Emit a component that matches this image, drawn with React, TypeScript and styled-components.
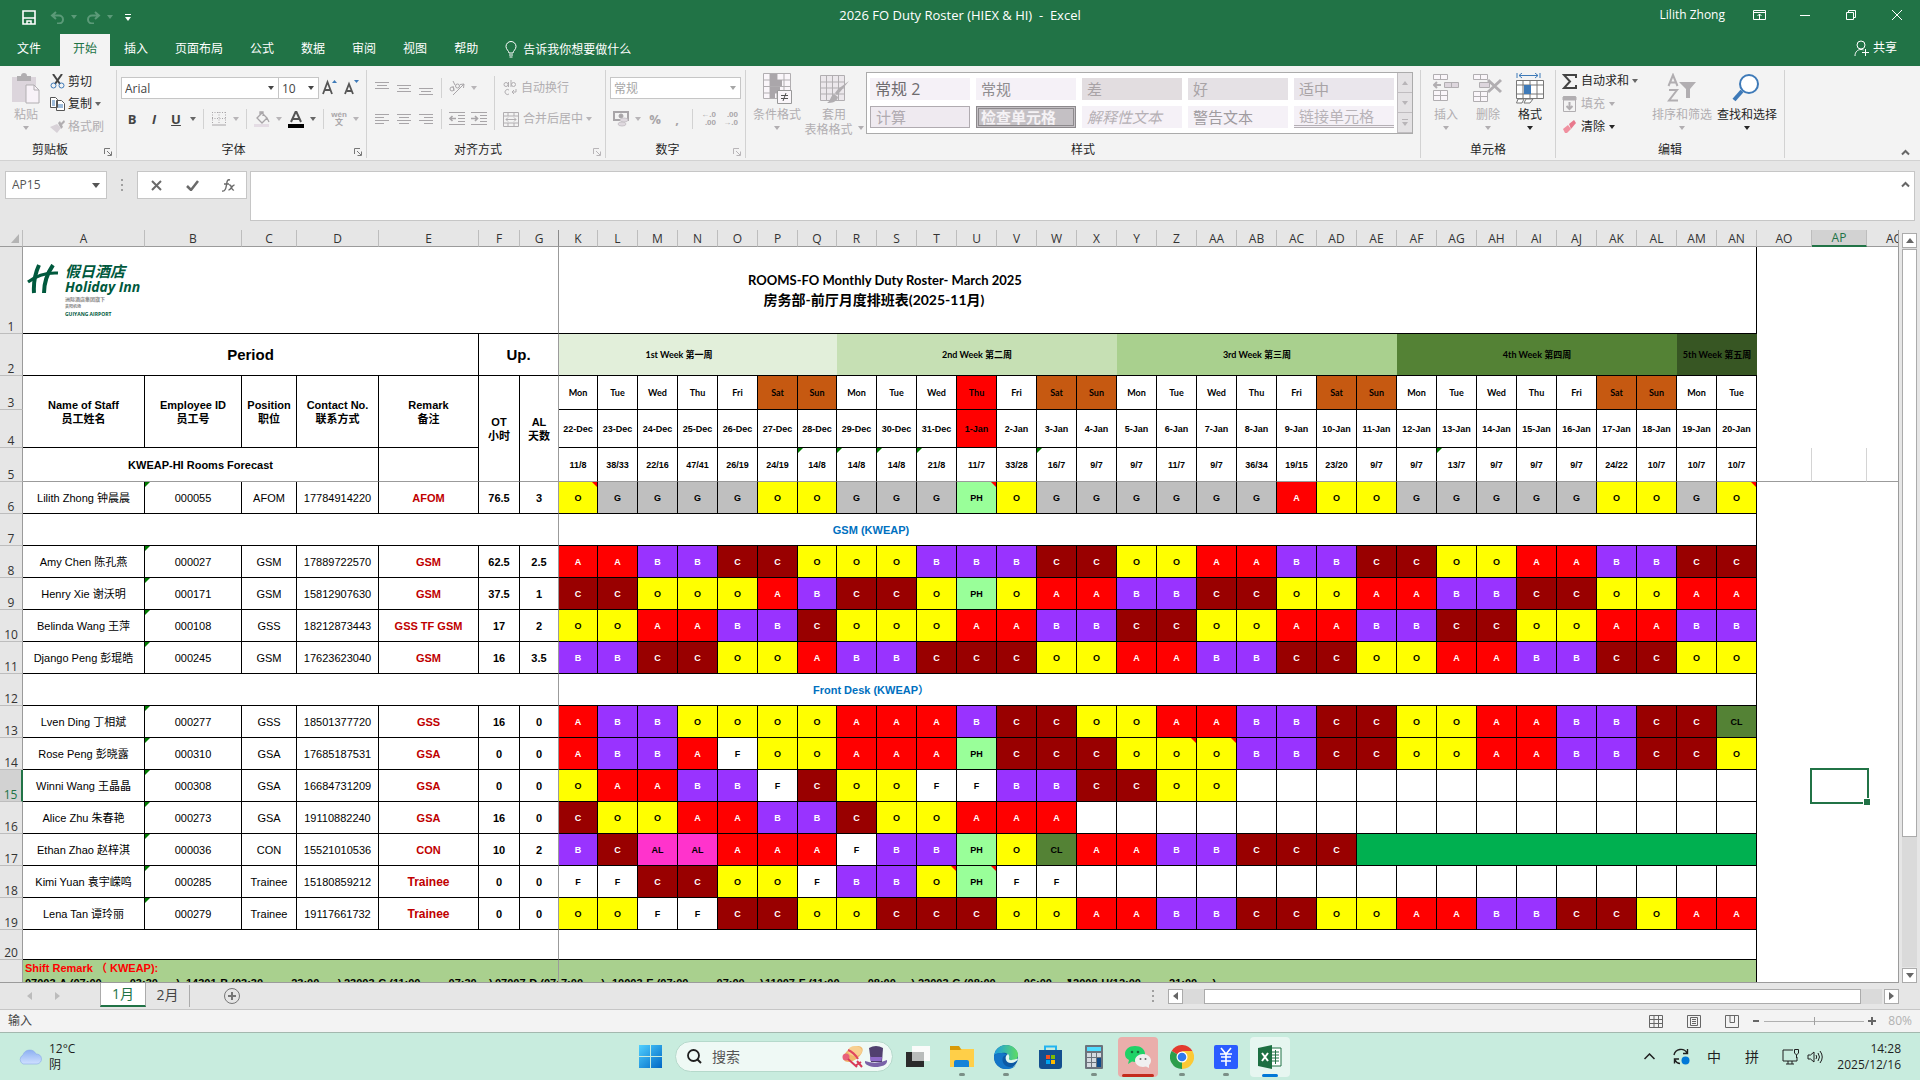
import React from "react";
import styled, { createGlobalStyle, css } from "styled-components";

const UI = `"Open Sans", "Noto Sans CJK SC", sans-serif`;
const ARIAL = `"Liberation Sans", "Noto Sans CJK SC", sans-serif`;
const CALIBRI = `Lato, "Noto Sans CJK SC", sans-serif`;
const GREEN = "#217346";

const Global = createGlobalStyle`
  * { box-sizing: border-box; }
  body { margin: 0; background: #e6e6e6; font: 12px/16px ${UI}; color: #262626; }
  button, input, select, textarea { font: inherit; color: inherit; margin: 0; padding: 0; border: 0; background: none; border-radius: 0; outline: none; }
  button { display: inline-flex; align-items: center; justify-content: center; }
  svg { display: block; flex: none; }
`;

const Page = styled.div`
  height: 100vh;
  min-height: 600px;
  display: flex;
  flex-direction: column;
  overflow: hidden;
`;

/* ---------- title bar and tabs ---------- */

const TitleBar = styled.header`
  display: grid;
  grid-template-columns: 1fr auto 1fr;
  align-items: center;
  height: 30px;
  background: ${GREEN};
  color: #fff;
`;
const QuickAccess = styled.div`
  display: flex;
  align-items: center;
  gap: 6px;
  padding: 4px 0 0 22px;
`;
const QuickButton = styled.button<{ $dim?: boolean; $gap?: number }>`
  color: ${(p) => (p.$dim ? "#5b9a78" : "#fff")};
  margin-right: ${(p) => p.$gap ?? 0}px;
`;
const DocTitle = styled.h1`
  margin: 0;
  font-size: 13px;
  font-weight: 400;
  white-space: pre;
`;
const WindowArea = styled.div`
  display: flex;
  justify-content: flex-end;
  align-items: center;
`;
const UserName = styled.span`
  margin-right: 11px;
`;
const WindowButton = styled.button`
  width: 46px;
  height: 30px;
`;

const TabRow = styled.nav`
  display: flex;
  align-items: stretch;
  gap: 1px;
  height: 36px;
  padding: 4px 15px 0 0;
  background: ${GREEN};
  color: #fff;
`;
const Tab = styled.button<{ $active?: boolean; $file?: boolean }>`
  padding: ${(p) => (p.$file ? "0 18px 3px 17px" : "0 13px 3px")};
  background: ${(p) => (p.$active ? "#f3f3f3" : "transparent")};
  color: ${(p) => (p.$active ? GREEN : "#fff")};
`;
const TellMe = styled.button`
  gap: 6px;
  padding: 0 0 1px 13px;
`;
const Share = styled.button`
  gap: 4px;
  margin-left: auto;
  padding: 0 8px 4px 0;
`;

/* ---------- ribbon ---------- */

const Ribbon = styled.section`
  display: flex;
  flex: none;
  height: 95px;
  padding: 4px 0 2px;
  background: #f3f3f3;
  border-bottom: 1px solid #d2d2d2;
`;
const Group = styled.div<{ $w: number }>`
  display: flex;
  flex-direction: column;
  flex: none;
  width: ${(p) => p.$w}px;
  border-right: 1px solid #d2d2d2;
`;
const GroupBody = styled.div<{ $pad?: number }>`
  display: flex;
  flex: 1;
  align-items: flex-start;
  padding-left: ${(p) => p.$pad ?? 4}px;
`;
const GroupFooter = styled.div`
  display: flex;
  height: 16px;
  align-items: center;
`;
const GroupName = styled.span`
  flex: 1;
  text-align: center;
`;
const Launcher = styled.button<{ $dim?: boolean }>`
  width: 16px;
  height: 12px;
  align-self: flex-end;
  color: ${(p) => (p.$dim ? "#b8b5b8" : "#777")};
`;
const Column = styled.div<{ $top?: number; $gap?: number; $left?: number; $min?: number }>`
  display: flex;
  flex-direction: column;
  min-width: ${(p) => p.$min ?? 0}px;
  padding-top: ${(p) => p.$top ?? 0}px;
  gap: ${(p) => p.$gap ?? 0}px;
  margin-left: ${(p) => p.$left ?? 0}px;
`;
const ToolRow = styled.div`
  display: flex;
  align-items: center;
  height: 22px;
`;
const Tool = styled.button<{ $dim?: boolean; $bold?: boolean; $italic?: boolean; $under?: boolean }>`
  width: 22px;
  height: 22px;
  font-size: 13px;
  color: ${(p) => (p.$dim ? "#a8a5a8" : "#444")};
  font-weight: ${(p) => (p.$bold ? 700 : 400)};
  font-style: ${(p) => (p.$italic ? "italic" : "normal")};
  text-decoration: ${(p) => (p.$under ? "underline" : "none")};
`;
const Drop = styled.button<{ $dim?: boolean }>`
  width: 12px;
  height: 22px;
  color: ${(p) => (p.$dim ? "#b8b5b8" : "#666")};
`;
const Split = styled.span<{ $h?: number }>`
  width: 1px;
  height: ${(p) => p.$h ?? 20}px;
  margin: 0 4px;
  background: #d2d2d2;
`;
const SmallButton = styled.button<{ $dim?: boolean; $h?: number; $gap?: number }>`
  justify-content: flex-start;
  height: ${(p) => p.$h ?? 23}px;
  gap: ${(p) => p.$gap ?? 4}px;
  white-space: nowrap;
  color: ${(p) => (p.$dim ? "#b1aeb1" : "#262626")};
`;
const BigButton = styled.button<{ $w: number; $dim?: boolean }>`
  flex-direction: column;
  justify-content: flex-start;
  width: ${(p) => p.$w}px;
  padding-top: 3px;
  line-height: 15px;
  white-space: nowrap;
  color: ${(p) => (p.$dim ? "#b1aeb1" : "#262626")};
  svg:first-child { margin-bottom: 3px; }
`;
const CaretLine = styled.span`
  display: flex;
  align-items: center;
  justify-content: center;
  gap: 5px;
  min-height: 15px;
`;
const SelectWrap = styled.label<{ $w: number; $dim?: boolean }>`
  display: grid;
  align-items: center;
  width: ${(p) => p.$w}px;
  height: 22px;
  background: #fff;
  border: 1px solid #c6c6c6;
  color: ${(p) => (p.$dim ? "#a6a6a6" : "#444")};
  & + & { border-left: 0; }
  select { grid-area: 1 / 1; appearance: none; width: 100%; height: 20px; padding: 1px 0 0 3px; }
  svg { grid-area: 1 / 1; justify-self: end; margin-right: 4px; pointer-events: none; }
`;

const Gallery = styled.div`
  display: flex;
  margin: 2px 0 0 2px;
  height: 62px;
  border: 1px solid #ababab;
  background: #fff;
`;
const StyleGrid = styled.div`
  display: grid;
  grid-template-columns: repeat(5, 100px);
  grid-auto-rows: 22px;
  gap: 6px;
  padding: 5px 3px;
`;
const StyleChip = styled.button<{ $bg: string; $fg: string; $kind?: string }>`
  justify-content: flex-start;
  padding-left: 5px;
  overflow: hidden;
  white-space: pre;
  font-size: ${(p) => (p.$kind === "large" ? 16 : 15)}px;
  background: ${(p) => p.$bg};
  color: ${(p) => p.$fg};
  ${(p) => p.$kind === "box" && css`border: 1px solid #b0abb0;`}
  ${(p) => p.$kind === "check" && css`border: 3px double #8d8a8d; font-weight: 700; padding-left: 2px;`}
  ${(p) => p.$kind === "italic" && css`font-style: italic;`}
  ${(p) => p.$kind === "link" && css`border-bottom: 3px double #b5b0b5;`}
`;
const GalleryScroll = styled.div`
  display: grid;
  grid-template-rows: repeat(3, 1fr);
  width: 15px;
  background: #e4e2e4;
  color: #b8b5b8;
  button { border-left: 1px solid #c0bdc0; border-bottom: 1px solid #c0bdc0; }
`;
const Collapse = styled.button`
  margin: auto 10px 2px auto;
  color: #666;
`;

/* ---------- formula bar ---------- */

const FormulaBar = styled.section`
  display: flex;
  flex: none;
  height: 69px;
  padding: 10px 5px 9px;
`;
const NameBox = styled.div`
  display: flex;
  align-items: center;
  width: 102px;
  height: 28px;
  padding: 0 6px;
  background: #fff;
  border: 1px solid #c6c6c6;
  color: #555;
  input { flex: 1; min-width: 0; }
`;
const Dots = styled.span`
  display: flex;
  flex-direction: column;
  justify-content: center;
  gap: 3px;
  height: 28px;
  width: 30px;
  align-items: center;
  i { width: 2px; height: 2px; background: #a0a0a0; }
`;
const EditButtons = styled.div`
  display: flex;
  width: 110px;
  height: 28px;
  background: #fff;
  border: 1px solid #c6c6c6;
  color: #6a6a6a;
  button { flex: 1; }
`;
const FormulaInput = styled.div`
  display: flex;
  flex: 1;
  margin-left: 3px;
  background: #fff;
  border: 1px solid #c6c6c6;
  textarea { flex: 1; resize: none; }
  button { align-items: flex-start; padding: 9px 4px; color: #666; }
`;

/* ---------- worksheet ---------- */

const SheetArea = styled.main`
  display: flex;
  flex: 1;
  min-height: 0;
`;
const Pane = styled.div`
  flex: 1;
  min-width: 0;
  overflow: hidden;
  background: #fff;
  border-bottom: 1px solid #9b9b9b;
`;
const Sheet = styled.table`
  width: 100%;
  min-width: 1890px;
  table-layout: fixed;
  border-collapse: separate;
  border-spacing: 0;
  font: 11px/14px ${ARIAL};
  color: #000;
`;
const Col = styled.col<{ $w?: number }>`
  width: ${(p) => (p.$w ? `${p.$w}px` : "auto")};
`;
const Line = styled.tr<{ $h: number }>`
  height: ${(p) => p.$h}px;
`;
const ColHead = styled.th<{ $on?: boolean; $freeze?: boolean; $cut?: boolean }>`
  padding: 0 0 0 ${(p) => (p.$cut ? 19 : 0)}px;
  overflow: hidden;
  font: 12px/15px ${UI};
  text-align: ${(p) => (p.$cut ? "left" : "center")};
  background: ${(p) => (p.$on ? "#d2d2d2" : "#e6e6e6")};
  color: ${(p) => (p.$on ? GREEN : "#333")};
  border-bottom: ${(p) => (p.$on ? `2px solid ${GREEN}` : "1px solid #9b9b9b")};
  border-right: ${(p) => (p.$cut ? 0 : 1)}px solid ${(p) => (p.$freeze ? "#8a8a8a" : "#bdbdbd")};
  svg { margin-left: 11px; }
`;
const RowHead = styled.th<{ $on?: boolean }>`
  padding: 0;
  vertical-align: bottom;
  font: 12px/13px ${UI};
  background: ${(p) => (p.$on ? "#d2d2d2" : "#e6e6e6")};
  color: ${(p) => (p.$on ? GREEN : "#333")};
  border-bottom: 1px solid #bdbdbd;
  border-right: ${(p) => (p.$on ? `2px solid ${GREEN}` : "1px solid #9b9b9b")};
`;

type CellProps = {
  $bg?: string;
  $fg?: string;
  $size?: number;
  $bold?: boolean;
  $calibri?: boolean;
  $freeze?: boolean;
  $split?: boolean;
  $noRight?: boolean;
  $left?: boolean;
  $top?: boolean;
  $shift?: number;
  $err?: boolean;
  $note?: boolean;
};
const Cell = styled.td<CellProps>`
  position: relative;
  padding: 0 ${(p) => p.$shift ?? 0}px 0 0;
  vertical-align: ${(p) => (p.$top ? "top" : "middle")};
  text-align: ${(p) => (p.$left ? "left" : "center")};
  white-space: nowrap;
  background: ${(p) => p.$bg ?? "#fff"};
  color: ${(p) => p.$fg ?? "#000"};
  font-size: ${(p) => p.$size ?? 11}px;
  font-weight: ${(p) => (p.$bold ? 700 : 400)};
  ${(p) => p.$calibri && css`font-family: ${CALIBRI};`}
  border-right: ${(p) => (p.$noRight ? "0" : `1px solid ${p.$freeze ? "#9b9b9b" : "#000"}`)};
  border-bottom: 1px solid ${(p) => (p.$split ? "#9b9b9b" : "#000")};
  ${(p) => p.$err && css`
    &::before {
      content: "";
      position: absolute;
      left: 0;
      top: 0;
      border-top: 5px solid #007a00;
      border-right: 5px solid transparent;
    }
  `}
  ${(p) => p.$note && css`
    &::after {
      content: "";
      position: absolute;
      right: 0;
      top: 0;
      border-top: 5px solid #f00;
      border-left: 5px solid transparent;
    }
  `}
`;
const Blank = styled.td<{ $line?: boolean; $split?: boolean; $selected?: boolean }>`
  position: relative;
  padding: 0;
  border-right: ${(p) => (p.$line ? "1px solid #d4d4d4" : "0")};
  border-bottom: ${(p) => (p.$split ? "1px solid #9b9b9b" : "0")};
  ${(p) => p.$selected && css`
    &::before {
      content: "";
      position: absolute;
      inset: -2px;
      border: 2px solid ${GREEN};
    }
    &::after {
      content: "";
      position: absolute;
      right: -3px;
      bottom: -3px;
      width: 6px;
      height: 6px;
      background: ${GREEN};
      border: solid #fff;
      border-width: 1px 0 0 1px;
    }
  `}
`;
const Title = styled.div<{ $w: number }>`
  width: ${(p) => p.$w}px;
  text-align: center;
`;
const TitleLine = styled.div<{ $cn?: boolean }>`
  font: 700 ${(p) => (p.$cn ? 14 : 13)}px/20px ${CALIBRI};
  padding-right: ${(p) => (p.$cn ? 22 : 0)}px;
`;
const HotelLogo = styled.div`
  display: flex;
  align-items: flex-start;
  gap: 6px;
  padding-left: 4px;
  color: #00593d;
  text-align: left;
`;
const LogoText = styled.div`
  display: flex;
  flex-direction: column;
`;
const LogoLine = styled.span<{ $size: number; $lh: number; $grey?: boolean; $slant?: boolean }>`
  font: 700 ${(p) => p.$size}px/${(p) => p.$lh}px ${UI};
  font-style: ${(p) => (p.$slant ? "italic" : "normal")};
  color: ${(p) => (p.$grey ? "#8a8a8a" : "#00593d")};
`;
const Remark = styled.div`
  height: 16px;
  line-height: 17px;
  padding-left: 2px;
  color: #f00;
  font-size: 11px;
`;
const ShiftList = styled.div<{ $cols: string }>`
  display: grid;
  grid-template-columns: ${(p) => p.$cols};
  padding-left: 2px;
  line-height: 15px;
  font-size: 11px;
  white-space: pre;
  overflow: hidden;
`;

const VScroll = styled.div`
  display: flex;
  flex-direction: column;
  width: 22px;
  padding: 3px 3px 0;
  border-left: 1px solid #9b9b9b;
  background: #e6e6e6;
`;
const ScrollButton = styled.button`
  flex: none;
  width: 15px;
  height: 15px;
  background: #fff;
  border: 1px solid #ababab;
  color: #666;
`;
const VTrack = styled.div`
  flex: 1;
  width: 15px;
  padding: 1px 0;
  background: #dadada;
  margin-bottom: 1px;
`;
const VThumb = styled.div`
  height: 82%;
  background: #fff;
  border: 1px solid #ababab;
`;

/* ---------- sheet tabs and status bar ---------- */

const SheetTabs = styled.nav`
  display: flex;
  flex: none;
  height: 27px;
  border-bottom: 1px solid #c6c6c6;
  color: #444;
`;
const NavArrows = styled.div`
  display: flex;
  width: 100px;
  padding: 0 29px 0 15px;
  color: #bcbcbc;
  button { width: 28px; }
`;
const SheetTab = styled.button<{ $active?: boolean }>`
  width: ${(p) => (p.$active ? 46 : 43)}px;
  height: 24px;
  font-size: 14px;
  background: ${(p) => (p.$active ? "#fff" : "transparent")};
  color: ${(p) => (p.$active ? GREEN : "#444")};
  ${(p) => p.$active && css`border: solid #ababab; border-width: 0 1px 2px; border-bottom-color: ${GREEN};`}
`;
const AddSheet = styled.button`
  width: 84px;
  margin-top: 2px;
  height: 22px;
  border-left: 1px solid #ababab;
`;
const HScroll = styled.div`
  display: flex;
  align-items: center;
  width: 40%;
  max-width: 761px;
  margin: 0 21px 0 auto;
`;
const HTrack = styled.div`
  display: flex;
  flex: 1;
  height: 15px;
  margin-right: 2px;
  padding: 0 21px;
  background: #dadada;
`;
const HThumb = styled.div`
  flex: 1;
  background: #fff;
  border: 1px solid #ababab;
`;
const StatusBar = styled.footer`
  display: flex;
  flex: none;
  align-items: center;
  height: 22px;
  padding: 0 8px;
  background: #f3f3f3;
  color: #444;
`;
const StatusTools = styled.div`
  display: flex;
  align-items: center;
  margin-left: auto;
`;
const ViewButton = styled.button`
  width: 38px;
  height: 20px;
  color: #666;
`;
const ZoomButton = styled.button`
  width: 10px;
  color: #666;
`;
const ZoomRange = styled.input`
  appearance: none;
  width: 100px;
  height: 12px;
  margin: 0 3px;
  background: linear-gradient(#b0b0b0, #b0b0b0) center / 100% 1px no-repeat;
  &::-webkit-slider-thumb { appearance: none; width: 1px; height: 8px; background: #a0a0a0; }
`;
const ZoomText = styled.span`
  margin-left: 11px;
  color: #b1b1b1;
`;

/* ---------- taskbar ---------- */

const Taskbar = styled.footer`
  display: grid;
  grid-template-columns: 1fr auto 1fr;
  flex: none;
  align-items: center;
  height: 48px;
  border-top: 1px solid #a3b8ae;
  background: #c8ecde;
  color: #1f1f1f;
`;
const Weather = styled.button`
  justify-self: start;
  gap: 7px;
  padding-left: 18px;
  text-align: left;
`;
const Apps = styled.div`
  display: flex;
  align-items: center;
`;
const AppButton = styled.button<{ $mark?: string; $tile?: string }>`
  position: relative;
  width: 44px;
  height: 40px;
  &::before {
    content: "";
    position: absolute;
    inset: 0 2px;
    border-radius: 4px;
    background: ${(p) => p.$tile ?? "transparent"};
  }
  svg { position: relative; }
  ${(p) => p.$mark && css`
    &::after {
      content: "";
      position: absolute;
      bottom: ${p.$mark === "dot" ? 1 : 0}px;
      left: 50%;
      width: ${p.$mark === "dot" ? 6 : p.$mark === "blue" ? 16 : 32}px;
      height: 3px;
      border-radius: 2px;
      transform: translateX(-50%);
      background: ${p.$mark === "dot" ? "#7b8f86" : p.$mark === "blue" ? "#0078d7" : "#c42b1c"};
    }
  `}
`;
const Search = styled.label`
  display: flex;
  align-items: center;
  gap: 10px;
  width: 218px;
  height: 31px;
  margin: 0 3px;
  padding: 0 4px 0 11px;
  border-radius: 16px;
  border: 1px solid #b5d9cb;
  background: #eff9f5;
  font-size: 14px;
  input { flex: 1; min-width: 0; }
  input::placeholder { color: #555; opacity: 1; }
`;
const Tray = styled.div`
  display: flex;
  align-items: center;
  justify-content: flex-end;
  padding-right: 19px;
`;
const TrayButton = styled.button<{ $w: number }>`
  width: ${(p) => p.$w}px;
  height: 32px;
  font-size: 14px;
`;
const Clock = styled.div`
  width: 78px;
  text-align: right;
  white-space: nowrap;
`;

/* ---------- icons ---------- */

type SvgProps = { w: number; h: number; children: React.ReactNode };
const Svg = ({ w, h, children }: SvgProps) => (
  <svg width={w} height={h} viewBox={`0 0 ${w} ${h}`} fill="none" stroke="currentColor" aria-hidden="true">
    {children}
  </svg>
);
const Caret = () => <Svg w={6} h={4}><path d="M0 0h6L3 4z" fill="currentColor" stroke="none" /></Svg>;
const ChevronUp = () => <Svg w={9} h={7}><path d="M1 5.500 4.500 2 8 5.500" strokeWidth="2" /></Svg>;
const TriUp = () => <Svg w={8} h={5}><path d="M0 5h8L4 0z" fill="currentColor" stroke="none" /></Svg>;
const TriDown = () => <Svg w={8} h={5}><path d="M0 0h8L4 5z" fill="currentColor" stroke="none" /></Svg>;
const TriLeft = () => <Svg w={5} h={8}><path d="M5 0v8L0 4z" fill="currentColor" stroke="none" /></Svg>;
const TriRight = () => <Svg w={5} h={8}><path d="M0 0v8l5-4z" fill="currentColor" stroke="none" /></Svg>;
const LaunchIcon = () => <Svg w={8} h={8}><path d="M.5 6V.5H6M3 3l4 4M7.500 3.500v4h-4" /></Svg>;

const SaveIcon = () => (
  <Svg w={14} h={15}><path d="M1 1h12v13H1z" strokeWidth="1.600" /><path d="M1 8h12M5 14v-3h4v3" strokeWidth="1.500" /></Svg>
);
const UndoIcon = () => <Svg w={15} h={13}><path d="M6 1 2 4.500 6 8M2 4.500h7a4 4 0 0 1 0 8H7" strokeWidth="2" /></Svg>;
const RedoIcon = () => <Svg w={15} h={13}><path d="M9 1l4 3.500L9 8M13 4.500H6a4 4 0 0 0 0 8h2" strokeWidth="2" /></Svg>;
const BulbIcon = () => (
  <Svg w={12} h={17}><path d="M4 12c0-2-3-3.500-3-6.500a5 5 0 0 1 10 0C11 8.500 8 10 8 12zM4 14h4M4.500 16h3" /></Svg>
);
const ShareIcon = () => (
  <Svg w={15} h={17}><circle cx="7" cy="5" r="4" /><path d="M1 16c0-4 2.500-6.500 6-6.500 1 0 2 .2 2.500.5M11.500 9v7M8 12.500h7" /></Svg>
);

const PasteIcon = () => (
  <Svg w={30} h={31}>
    <path d="M1 4h24v25H1z" fill="#dcd5dc" stroke="none" />
    <path d="M6 3h4a3 3 0 0 1 6 0h4v5H6z" fill="#b1aeb1" stroke="none" />
    <path d="M15 12h8l5 5v13H15z" fill="#f8f2f8" stroke="#b1aeb1" />
    <path d="M23 12v5h5" stroke="#b1aeb1" />
  </Svg>
);
const CutIcon = () => (
  <Svg w={15} h={15}>
    <path d="M3 0l7 10M12 0 5 10" stroke="#444" strokeWidth="2" />
    <circle cx="3.500" cy="11.500" r="2.500" stroke="#3e7ab8" /><circle cx="11.500" cy="11.500" r="2.500" stroke="#3e7ab8" />
  </Svg>
);
const CopyIcon = () => (
  <Svg w={15} h={14}>
    <path d="M.5.5h5l2 2v8h-7zM6.500 3.500h5l3 3v7h-8z" fill="#fff" stroke="#555" />
    <path d="M2 4h3M2 6h3M2 8h3M8 8h5M8 10h5" stroke="#3e7ab8" />
  </Svg>
);
const BrushIcon = () => (
  <Svg w={15} h={14}>
    <path d="M8 3l2-2 1 2 3-3 1 2-3 3 1 2-2 2z" fill="#b1aeb1" stroke="none" />
    <path d="M0 7l7-3 4 4-4 5z" fill="#d8d2d8" stroke="none" />
  </Svg>
);
const GrowFont = ({ down }: { down?: boolean }) => (
  <Svg w={16} h={18}>
    <path d={down ? "M1 15l4-10 4 10M3 12h5" : "M1 15 5.500 3 10 15M3 11h6"} stroke="#555" strokeWidth="1.800" />
    <path d={down ? "M10 1h5l-2.500 3z" : "M10 4h5l-2.500-3z"} fill="#3e7ab8" stroke="none" />
  </Svg>
);
const BorderIcon = () => (
  <Svg w={14} h={14}><path d="M.5 0v12M7 0v12M13.500 0v12M0 .5h14M0 6.500h14" strokeDasharray="1 1.500" /><path d="M0 13h14" /></Svg>
);
const BucketIcon = () => (
  <Svg w={17} h={17}>
    <path d="M3 7l5-5 5 5-5 5zM6 4V1h3v4M13 7l2 4" strokeWidth="1.300" /><path d="M0 13h15v3H0z" fill="#e4dce4" stroke="none" />
  </Svg>
);
const FontColor = () => (
  <Svg w={16} h={17}><path d="M3 11 8 0l5 11M5 8h6" stroke="#555" strokeWidth="2" /><path d="M0 13h16v4H0z" fill="#000" stroke="none" /></Svg>
);
const Lines = ({ d }: { d: string }) => <Svg w={14} h={14}><path d={d} /></Svg>;
const OrientIcon = () => (
  <Svg w={16} h={15}><path d="M4 14 15 3M15 3l-4 .5M15 3l-.5 4" /><circle cx="3" cy="8" r="2" /><path d="M5 10 4 5" /><circle cx="8.500" cy="5" r="2" /><path d="M6 4 4 0" /></Svg>
);
const IndentIcon = ({ right }: { right?: boolean }) => (
  <Svg w={16} h={14}><path d="M0 .5h16M9 3.500h7M9 6.500h7M9 9.500h7M0 12.500h16" /><path d={right ? "M0 6.500h6M4 4l2.500 2.500L4 9" : "M1 6.500h6M3.500 4 1 6.500 3.500 9"} strokeWidth="1.600" /></Svg>
);
const WrapIcon = () => (
  <Svg w={14} h={16}><circle cx="3" cy="4.500" r="2" /><path d="M5.500 2v5M8 0v7" /><circle cx="10.500" cy="4.500" r="2" /><path d="M6 10a2.500 2.500 0 1 0 0 4M13 9v3H9M11 10l-2 2 2 2" /></Svg>
);
const MergeIcon = () => (
  <Svg w={16} h={15}><path d="M.5.5h15v14H.5zM.5 4h15M.5 11h15M5 .5V4M11 .5V4M5 11v3.500M11 11v3.500M3 7.500h10M5 5.500l-2 2 2 2M11 5.500l2 2-2 2" /></Svg>
);
const MoneyIcon = () => (
  <Svg w={17} h={17}>
    <path d="M1 1h14v8H1z" strokeWidth="2" /><circle cx="8" cy="5" r="2" fill="currentColor" />
    <ellipse cx="11" cy="9" rx="4" ry="2" fill="#ded8de" stroke="#c9c4c9" /><ellipse cx="9" cy="13" rx="4" ry="2" fill="#ded8de" stroke="#c9c4c9" />
  </Svg>
);
const StackedGlyphs = styled.span<{ $center?: boolean }>`
  display: grid;
  justify-items: ${(p) => (p.$center ? "center" : "end")};
  width: 16px;
  font: 700 8px/8px ${ARIAL};
`;
const CondIcon = () => (
  <Svg w={30} h={31}>
    <path d="M1.500.5h27v25h-27zM1.500 7h27M1.500 13.500h27M1.500 20h27M8 .5v25M15 .5v25M22 .5v25" fill="#faf6fa" />
    <path d="M8 1h7v6H8zM8 7h12v6H8zM8 14h10v6H8zM8 20h5v5H8z" fill="#aaa6aa" stroke="none" />
    <path d="M15.500 17.500h14v13h-14z" fill="#faf6fa" stroke="#999" /><path d="M19 22.500h7M19 25.500h7M24 20l-3 8" stroke="#555" />
  </Svg>
);
const TableStyleIcon = () => (
  <Svg w={30} h={31}>
    <path d="M1.500 2.500h24v25h-24zM1.500 9h24M1.500 15h24M1.500 21h24M7.500 2.500v25M13.500 2.500v25M19.500 2.500v25" fill="#ece8ec" />
    <path d="M30 8l-9 11-3 3-2-2 3-4zM15 21l4 3c-1 5-6 6-11 6 4-2 3-7 7-9z" fill="#b1aeb1" stroke="none" />
  </Svg>
);
const InsertIcon = () => (
  <Svg w={26} h={31}>
    <path d="M.5 1.500h14v5H.5zM7.500 1.500v5M.5 17.500h14v10H.5zM.5 22.500h14M7.500 17.500v10" fill="#faf6fa" />
    <path d="M11.500 9.500h14v5h-14zM18.500 9.500v5" fill="#ddd6dd" /><path d="M1 12h7M4 9l-3 3 3 3" strokeWidth="2" />
  </Svg>
);
const DeleteIcon = () => (
  <Svg w={30} h={31}>
    <path d="M.5 1.500h14v5H.5zM7.500 1.500v5M.5 18.500h14v10H.5zM.5 23.500h14M7.500 18.500v10" fill="#faf6fa" />
    <path d="M6.500 9.500h10v5h-10z" fill="#ddd6dd" /><path d="M15 7l13 12M28 7 15 19" strokeWidth="3" />
  </Svg>
);
const FormatIcon = () => (
  <Svg w={30} h={31}>
    <path d="M2 0v5M25 0v5M4 2.500h19M7 0 4 2.500 7 5M20 0l3 2.500L20 5" stroke="#3e7ab8" />
    <path d="M1.500 7.500h27v18h-27zM1.500 12h27M1.500 21h27M8 7.500v18M15 7.500v18M22 7.500v18" fill="#fff" stroke="#777" />
    <path d="M9 12h7v9H9z" fill="#3e7ab8" stroke="none" /><path d="M3 26h6l-2 4H1.500zM11 26h7l-3 4H9z" fill="#fff" stroke="#777" />
  </Svg>
);
const SigmaIcon = () => <Svg w={15} h={15}><path d="M14 4V1H2l6 6.500L2 14h12v-3" stroke="#444" strokeWidth="2" /></Svg>;
const FillIcon = () => (
  <Svg w={15} h={16}><path d="M1.500.5h12v15h-12z" /><path d="M1 1h13v3H1z" fill="currentColor" /><path d="M7.500 6v7M4.500 10l3 3 3-3" strokeWidth="2" /></Svg>
);
const EraserIcon = () => (
  <Svg w={15} h={14}><path d="M7 4l5-4 2 3-5 6z" fill="#e8788c" stroke="none" /><path d="M6 5l3 4-4 4H3L1 9z" fill="#f0909f" stroke="none" /></Svg>
);
const SortIcon = () => (
  <Svg w={30} h={31}>
    <path d="M1.500 13 6 2l4.500 11M3 9.500h6M2 17h8L2 27.500h9" strokeWidth="2" />
    <path d="M12 9h17l-6 7v9h-4v-9z" fill="#b1aeb1" stroke="none" />
  </Svg>
);
const FindIcon = () => (
  <Svg w={30} h={31}><circle cx="17" cy="11" r="9" stroke="#3e7ab8" strokeWidth="2" fill="#fff" /><path d="M10 18 2 27" stroke="#3e7ab8" strokeWidth="4" /></Svg>
);

const CloudIcon = () => (
  <Svg w={24} h={17}>
    <defs><linearGradient id="cloud" x1="0" y1="0" x2="0" y2="1"><stop offset="0" stopColor="#8db0f2" /><stop offset="1" stopColor="#cfe0ff" /></linearGradient></defs>
    <path d="M5 16a5 5 0 0 1 0-9 7 7 0 0 1 13-1 5 5 0 0 1 1 10z" fill="url(#cloud)" stroke="#8aa9ea" strokeWidth=".6" />
  </Svg>
);
const WindowsLogo = () => (
  <Svg w={23} h={23}>
    <defs><linearGradient id="win" x1="0" y1="0" x2="1" y2="1"><stop offset="0" stopColor="#4fd0ff" /><stop offset="1" stopColor="#0067c5" /></linearGradient></defs>
    <path d="M0 0h11v11H0zM12 0h11v11H12zM0 12h11v11H0zM12 12h11v11H12z" fill="url(#win)" stroke="none" />
  </Svg>
);
const HatsIcon = () => (
  <Svg w={47} h={24}>
    <ellipse cx="12" cy="9" rx="11" ry="6" transform="rotate(-35 12 9)" fill="#f0b96c" stroke="none" />
    <ellipse cx="14" cy="6" rx="7" ry="5" fill="#f8cf90" stroke="none" />
    <path d="M7 5c3 1 8 5 10 9" stroke="#e0455e" strokeWidth="2" />
    <circle cx="5" cy="12" r="3.500" fill="#e8607a" stroke="none" /><path d="M7 14l9 8M20 17l-6 4M16 16l5 6" stroke="#d83a58" strokeWidth="2" />
    <path d="M28 3q7-4 14 0l-1 14H30z" fill="#51406f" stroke="none" /><path d="M29 12h12l-.5 4h-11z" fill="#8f6ac9" stroke="none" />
    <path d="M24 16q11 4 22-1c1 5-6 7-11 7s-12-2-11-6z" fill="#7a62a8" stroke="none" />
  </Svg>
);
const TaskViewIcon = () => (
  <Svg w={24} h={23}><path d="M0 7h18v15H0z" fill="#2b2b2b" stroke="none" /><path d="M6 1h18v15H6z" fill="#fafbfa" stroke="none" /><path d="M6 7h12v9H6z" fill="#b9bcbb" stroke="none" /></Svg>
);
const FolderIcon = () => (
  <Svg w={24} h={23}>
    <path d="M0 1h9l2 3h4v4H0z" fill="#d99a08" stroke="none" /><path d="M0 5h10l2-1h12v18H0z" fill="#ffcf48" stroke="none" />
    <path d="M4 22v-5q0-2 2-2h11q2 0 2 2v5z" fill="#1683d8" stroke="none" />
  </Svg>
);
const EdgeIcon = () => (
  <Svg w={24} h={24}>
    <defs><linearGradient id="edge" x1="0" y1="0" x2="1" y2="0"><stop offset="0" stopColor="#1b9de2" /><stop offset="1" stopColor="#5fdc62" /></linearGradient></defs>
    <circle cx="12" cy="12" r="12" fill="#0c59a4" stroke="none" />
    <path d="M0 11C1 4 6 0 12 0c7 0 12 5 12 10 0 4-3 6-6 6-2 0-4-1-3-3 1-4-4-6-7-5-4 0-8 1-8 3z" fill="url(#edge)" stroke="none" />
    <path d="M9 12c-2 5 2 10 7 10 3 0 5-1 6-2-3 4-7 4-10 4C5 24 0 18 0 12c0-3 4-4 8-4 2 0 4 1 5 2-2 0-3 1-4 2z" fill="#1376c8" stroke="none" />
    <path d="M14 9c-4 2-3 9 3 9 3 0 6-2 7-4-1-1-8 3-9 0 0-1 1-3-1-5z" fill="#e2f6ee" stroke="none" />
  </Svg>
);
const StoreIcon = () => (
  <Svg w={23} h={24}>
    <path d="M6 6V1.500h11V6" stroke="#22b4f0" strokeWidth="2" /><path d="M0 5h23v16q0 3-3 3H3q-3 0-3-3z" fill="#134f8f" stroke="none" />
    <path d="M7 10h4v4H7z" fill="#f25022" stroke="none" /><path d="M12 10h4v4h-4z" fill="#7fba00" stroke="none" />
    <path d="M7 15h4v4H7z" fill="#00a4ef" stroke="none" /><path d="M12 15h4v4h-4z" fill="#ffb900" stroke="none" />
  </Svg>
);
const CalcIcon = () => (
  <Svg w={18} h={24}>
    <rect width="18" height="24" rx="1" fill="#6b737c" stroke="none" /><path d="M2 2h14v4H2z" fill="#4fdcff" stroke="none" />
    <path d="M2 8h4v4H2zM7 8h4v4H7zM12 8h4v4h-4zM2 13h4v4H2zM7 13h4v4H7zM2 18h4v4H2zM7 18h4v4H7z" fill="#d5dae0" stroke="none" />
    <path d="M12 13h4v9h-4z" fill="#104a8a" stroke="none" />
  </Svg>
);
const WeChatIcon = () => (
  <Svg w={26} h={22}>
    <path d="M10 0c6 0 10 3.500 10 8s-4 8-10 8l-3-.5L3 18l1-4C1 12.500 0 10.500 0 8c0-4.500 4-8 10-8z" fill="#1fd267" stroke="none" />
    <circle cx="7" cy="6" r="1.300" fill="#156b38" stroke="none" /><circle cx="13" cy="6" r="1.300" fill="#156b38" stroke="none" />
    <path d="M18 8c4.500 0 8 3 8 6.500 0 2-1 3.500-2 4.500v3l-3-1.500-3 .5c-4.500 0-8-3-8-6.500S13.500 8 18 8z" fill="#f0f0f0" stroke="none" />
    <circle cx="15.500" cy="13" r="1" fill="#666" stroke="none" /><circle cx="20.500" cy="13" r="1" fill="#666" stroke="none" />
  </Svg>
);
const ChromeIcon = () => (
  <Svg w={24} h={24}>
    <path d="M12 12 1.600 6A12 12 0 0 1 22.400 6z" fill="#e33b2e" stroke="none" /><path d="M12 12 22.400 6A12 12 0 0 1 12 24z" fill="#fcc934" stroke="none" />
    <path d="M12 12v12A12 12 0 0 1 1.600 6z" fill="#2c9e4b" stroke="none" /><path d="M12 6h10.400L17 15z" fill="#fcc934" stroke="none" />
    <circle cx="12" cy="12" r="5.500" fill="#fff" stroke="none" /><circle cx="12" cy="12" r="4.300" fill="#3079ed" stroke="none" />
  </Svg>
);
const YenIcon = () => (
  <Svg w={24} h={24}><rect width="24" height="24" rx="2" fill="#2b5cff" stroke="none" /><path d="M7 3l5 6 5-6M12 9v12M7 12h10M7 16h10M6 9h12" stroke="#fff" strokeWidth="1.600" /></Svg>
);
const ExcelIcon = () => (
  <Svg w={24} h={24}>
    <path d="M12 3h11v18H12z" fill="#fff" stroke="#217346" /><path d="M14 7h7M14 10h7M14 13h7M14 16h7M17.500 5v14" stroke="#217346" />
    <path d="M0 3 14 0v24L0 21z" fill="#1d6f42" stroke="none" /><path d="M4 8l6 8M10 8l-6 8" stroke="#fff" strokeWidth="2" />
  </Svg>
);
const HMark = () => (
  <Svg w={32} h={30}>
    <path d="M12 1Q6 14 7 29M26 1Q17 14 17 29" strokeWidth="4" /><path d="M1 18Q14 8 31 9" strokeWidth="3" />
  </Svg>
);

/* ---------- data ---------- */

const letters = ["A", "B", "C", "D", "E", "F", "G", "K", "L", "M", "N", "O", "P", "Q", "R", "S", "T", "U", "V", "W", "X", "Y", "Z",
  "AA", "AB", "AC", "AD", "AE", "AF", "AG", "AH", "AI", "AJ", "AK", "AL", "AM", "AN", "AO", "AP", "AQ"];
const widths = [23, 122, 97, 55, 82, 100, 41, 39, 39, ...Array(5).fill(40), 39, ...Array(23).fill(40), 55, 55];

const weekdays = ["Mon", "Tue", "Wed", "Thu", "Fri", "Sat", "Sun"];
const weeks = [
  { label: "1st Week 第一周", span: 7, bg: "#e2efda", shift: 38 },
  { label: "2nd Week 第二周", span: 7, bg: "#c6e0b4" },
  { label: "3rd Week 第三周", span: 7, bg: "#a9d08e" },
  { label: "4th Week 第四周", span: 7, bg: "#548235" },
  { label: "5th Week 第五周", span: 2, bg: "#375623" },
];
const days = Array.from({ length: 30 }, (_, i) => ({
  day: weekdays[i % 7],
  date: i < 10 ? `${22 + i}-Dec` : `${i - 9}-Jan`,
  bg: i === 10 ? "#ff0000" : i % 7 > 4 ? "#c65911" : "#fff",
}));
const forecast = "11/8 38/33 22/16 47/41 26/19 24/19 14/8 14/8 14/8 21/8 11/7 33/28 16/7 9/7 9/7 11/7 9/7 36/34 19/15 23/20 9/7 9/7 13/7 9/7 9/7 9/7 24/22 10/7 10/7 10/7".split(" ");
const forecastFlags = [6, 7, 8, 9, 12, 22];

const shiftColors: Record<string, [string, string]> = {
  A: ["#ff0000", "#fff"],
  B: ["#9933ff", "#fff"],
  C: ["#990000", "#fff"],
  O: ["#ffff00", "#000"],
  G: ["#bfbfbf", "#000"],
  F: ["#fff", "#000"],
  PH: ["#99ff99", "#000"],
  AL: ["#ff33cc", "#000"],
  CL: ["#548235", "#000"],
};

type Staff = { row: number; name: string; id: string; pos: string; tel: string; remark: string; ot: string; al: string; shifts: string; notes?: number[]; leave?: number };
const staff: Record<number, Staff> = {};
const add = (s: Staff) => { staff[s.row] = s; };
add({ row: 6, name: "Lilith Zhong 钟晨晨", id: "000055", pos: "AFOM", tel: "17784914220", remark: "AFOM", ot: "76.5", al: "3", shifts: "O G G G G O O G G G PH O G G G G G G A O O G G G G G O O G O", notes: [0, 10, 29] });
add({ row: 8, name: "Amy Chen 陈孔燕", id: "000027", pos: "GSM", tel: "17889722570", remark: "GSM", ot: "62.5", al: "2.5", shifts: "A A B B C C O O O B B B C C O O A A B B C C O O A A B B C C" });
add({ row: 9, name: "Henry Xie 谢沃明", id: "000171", pos: "GSM", tel: "15812907630", remark: "GSM", ot: "37.5", al: "1", shifts: "C C O O O A B C C O PH O A A B B C C O O A A B B C C O O A A" });
add({ row: 10, name: "Belinda Wang 王萍", id: "000108", pos: "GSS", tel: "18212873443", remark: "GSS TF GSM", ot: "17", al: "2", shifts: "O O A A B B C O O O A A B B C C O O A A B B C C O O A A B B" });
add({ row: 11, name: "Django Peng 彭琨皓", id: "000245", pos: "GSM", tel: "17623623040", remark: "GSM", ot: "16", al: "3.5", shifts: "B B C C O O A B B C C C O O A A B B C C O O A A B B C C O O" });
add({ row: 13, name: "Lven Ding 丁相斌", id: "000277", pos: "GSS", tel: "18501377720", remark: "GSS", ot: "16", al: "0", shifts: "A B B O O O O A A A B C C O O A A B B C C O O A A B B C C CL" });
add({ row: 14, name: "Rose Peng 彭晓露", id: "000310", pos: "GSA", tel: "17685187531", remark: "GSA", ot: "0", al: "0", shifts: "A B B A F O O A A A PH C C C O O O B B C C O O A A B B C C O", notes: [15, 16] });
add({ row: 15, name: "Winni Wang 王晶晶", id: "000308", pos: "GSA", tel: "16684731209", remark: "GSA", ot: "0", al: "0", shifts: "O A A B B F C O O F F B B C C O O" });
add({ row: 16, name: "Alice Zhu 朱春艳", id: "000273", pos: "GSA", tel: "19110882240", remark: "GSA", ot: "16", al: "0", shifts: "C O O A A B B C O O A A A" });
add({ row: 17, name: "Ethan Zhao 赵梓淇", id: "000036", pos: "CON", tel: "15521010536", remark: "CON", ot: "10", al: "2", shifts: "B C AL AL A A A F B B PH O CL A A B B C C C", leave: 10 });
add({ row: 18, name: "Kimi Yuan 袁宇嵘鸣", id: "000285", pos: "Trainee", tel: "15180859212", remark: "Trainee", ot: "0", al: "0", shifts: "F F C C O O F B B O PH F F", notes: [9, 10] });
add({ row: 19, name: "Lena Tan 谭玲丽", id: "000279", pos: "Trainee", tel: "19117661732", remark: "Trainee", ot: "0", al: "0", shifts: "O O F F C C O O C C C O O A A B B C C O O A A B B C C O A A" });

const sections: Record<number, { label: string; w: number }> = {
  7: { label: "GSM (KWEAP)", w: 624 },
  12: { label: "Front Desk (KWEAP）", w: 624 },
};

const Outside = ({ line, split, selected }: { line?: boolean; split?: boolean; selected?: boolean }) => (
  <>
    <Blank $line={line} $split={split} />
    <Blank $line={line} $split={split} $selected={selected} />
    <Blank $split={split} />
  </>
);

const StaffRow = ({ s }: { s: Staff }) => {
  const codes = s.shifts.split(" ");
  const total = 30 - (s.leave ?? 0);
  return (
    <Line $h={32}>
      <RowHead $on={s.row === 15}>{s.row}</RowHead>
      <Cell>{s.name}</Cell>
      <Cell $err>{s.id}</Cell>
      <Cell>{s.pos}</Cell>
      <Cell>{s.tel}</Cell>
      <Cell $bold $size={s.pos === "Trainee" ? 12 : 11} $fg="#c00000">{s.remark}</Cell>
      <Cell $bold>{s.ot}</Cell>
      <Cell $bold $freeze>{s.al}</Cell>
      {Array.from({ length: total }, (_, i) => {
        const code = codes[i];
        const [bg, fg] = code ? shiftColors[code] : ["#fff", "#000"];
        return <Cell key={i} $bold $size={9} $bg={bg} $fg={fg} $note={s.notes?.includes(i)}>{code}</Cell>;
      })}
      {s.leave && <Cell colSpan={s.leave} $bg="#00b050" />}
      <Outside selected={s.row === 15} />
    </Line>
  );
};

const Worksheet = () => (
  <Sheet>
    <colgroup>
      {widths.map((w, i) => <Col key={i} $w={w} />)}
      <Col />
    </colgroup>
    <thead>
      <Line $h={17}>
        <ColHead aria-label="Select all"><Svg w={8} h={9}><path d="M8 0v9H0z" fill="#b4b4b4" stroke="none" /></Svg></ColHead>
        {letters.map((l) => <ColHead key={l} $on={l === "AP"} $freeze={l === "G"} $cut={l === "AQ"}>{l}</ColHead>)}
      </Line>
    </thead>
    <tbody>
      <Line $h={87}>
        <RowHead>1</RowHead>
        <Cell colSpan={7} $freeze>
          <HotelLogo>
            <HMark />
            <LogoText>
              <LogoLine $size={15} $lh={15} $slant>假日酒店</LogoLine>
              <LogoLine $size={14} $lh={16} $slant>Holiday Inn</LogoLine>
              <LogoLine $size={5} $lh={8} $grey>洲际酒店集团旗下</LogoLine>
              <LogoLine $size={4} $lh={8} $grey>贵阳机场</LogoLine>
              <LogoLine $size={5} $lh={6}>GUIYANG AIRPORT</LogoLine>
            </LogoText>
          </HotelLogo>
        </Cell>
        <Cell colSpan={30} $left>
          <Title $w={652}>
            <TitleLine>ROOMS-FO Monthly Duty Roster- March 2025</TitleLine>
            <TitleLine $cn>房务部-前厅月度排班表(2025-11月)</TitleLine>
          </Title>
        </Cell>
        <Outside />
      </Line>
      <Line $h={42}>
        <RowHead>2</RowHead>
        <Cell colSpan={5} $bold $size={15}>Period</Cell>
        <Cell colSpan={2} $bold $size={15} $freeze>Up.</Cell>
        {weeks.map((w) => <Cell key={w.label} colSpan={w.span} $bold $calibri $size={9} $bg={w.bg} $shift={w.shift} $noRight>{w.label}</Cell>)}
        <Outside />
      </Line>
      <Line $h={34}>
        <RowHead>3</RowHead>
        <Cell rowSpan={2} $bold>Name of Staff<br />员工姓名</Cell>
        <Cell rowSpan={2} $bold>Employee ID<br />员工号</Cell>
        <Cell rowSpan={2} $bold>Position<br />职位</Cell>
        <Cell rowSpan={2} $bold>Contact No.<br />联系方式</Cell>
        <Cell rowSpan={2} $bold>Remark<br />备注</Cell>
        <Cell rowSpan={3} $bold $split>OT<br />小时</Cell>
        <Cell rowSpan={3} $bold $split $freeze>AL<br />天数</Cell>
        {days.map((d) => <Cell key={d.date} $bold $calibri $size={9} $bg={d.bg}>{d.day}</Cell>)}
        <Outside />
      </Line>
      <Line $h={38}>
        <RowHead>4</RowHead>
        {days.map((d, i) => <Cell key={d.date} $bold $size={9} $bg={i === 10 ? d.bg : "#fff"}>{d.date}</Cell>)}
        <Outside />
      </Line>
      <Line $h={34}>
        <RowHead>5</RowHead>
        <Cell colSpan={4} $bold $split>KWEAP-HI Rooms Forecast</Cell>
        <Cell $split />
        {forecast.map((f, i) => <Cell key={i} $bold $size={9} $split $err={forecastFlags.includes(i)}>{f}</Cell>)}
        <Outside line split />
      </Line>
      {Array.from({ length: 14 }, (_, i) => i + 6).map((row) =>
        sections[row] ? (
          <Line key={row} $h={32}>
            <RowHead>{row}</RowHead>
            <Cell colSpan={7} $freeze />
            <Cell colSpan={30} $left $bold $fg="#0070c0"><Title $w={sections[row].w}>{sections[row].label}</Title></Cell>
            <Outside />
          </Line>
        ) : (
          <StaffRow key={row} s={staff[row]} />
        )
      )}
      <Line $h={30}>
        <RowHead>20</RowHead>
        <Cell colSpan={7} $freeze />
        <Cell colSpan={30} />
        <Outside />
      </Line>
      <Line $h={60}>
        <RowHead />
        <Cell colSpan={7} $freeze $bold $left $top $bg="#a9d08e">
          <Remark>Shift Remark （ KWEAP):</Remark>
          <ShiftList $cols="161px 158px 151px 1fr">
            <span>07003-A (07:00 —— 03:30      )</span><span>14301-B (03:30 —— 23:00      )</span><span>23003-C (11:00 —— 07:30    )</span><span>07007-D (07:</span>
          </ShiftList>
        </Cell>
        <Cell colSpan={30} $bold $left $top $bg="#a9d08e">
          <Remark />
          <ShiftList $cols="51px 153px 153px 149px 1fr">
            <span>7:00      )</span><span>10003-E (07:00 —— 07:00     )</span><span>11007-F (11:00 —— 08:00     )</span><span>22003-G (08:00 —— 06:00     )</span><span>12008-H(12:00 —— 21:00     )</span>
          </ShiftList>
        </Cell>
        <Outside />
      </Line>
    </tbody>
  </Sheet>
);

const styleChips = [
  { t: "常规 2", bg: "#f5f1f7", fg: "#6f6c6f", kind: "large" },
  { t: "常规", bg: "#f5f1f7", fg: "#8f8c8f" },
  { t: "差", bg: "#e2dde0", fg: "#a8a3a6" },
  { t: "好", bg: "#e5e1e5", fg: "#a8a3a6" },
  { t: "适中", bg: "#eae6ec", fg: "#a8a3a6" },
  { t: "计算", bg: "#efeaf0", fg: "#b0abb0", kind: "box" },
  { t: "检查单元格", bg: "#c4c0c4", fg: "#f5f2f5", kind: "check" },
  { t: "解释性文本", bg: "#f5f1f7", fg: "#b5b0b5", kind: "italic" },
  { t: "警告文本", bg: "#f5f1f7", fg: "#9f9b9f" },
  { t: "链接单元格", bg: "#f5f1f7", fg: "#b8b3b8", kind: "link" },
];

const Footer = ({ name, launcher, dim }: { name: string; launcher?: boolean; dim?: boolean }) => (
  <GroupFooter>
    <GroupName>{name}</GroupName>
    {launcher && <Launcher $dim={dim} aria-label={`${name}设置`}><LaunchIcon /></Launcher>}
  </GroupFooter>
);

const RibbonBar = () => (
  <Ribbon>
    <Group $w={117}>
      <GroupBody $pad={7}>
        <BigButton $w={38} $dim><PasteIcon />粘贴<CaretLine><Caret /></CaretLine></BigButton>
        <Column $left={5}>
          <SmallButton $gap={3}><CutIcon />剪切</SmallButton>
          <ToolRow><SmallButton $gap={3}><CopyIcon />复制</SmallButton><Drop aria-label="复制选项"><Caret /></Drop></ToolRow>
          <SmallButton $gap={3} $dim><BrushIcon />格式刷</SmallButton>
        </Column>
      </GroupBody>
      <Footer name="剪贴板" launcher />
    </Group>
    <Group $w={250}>
      <GroupBody>
        <Column $top={7} $gap={9}>
          <ToolRow>
            <SelectWrap $w={158}><select aria-label="字体" defaultValue="Arial"><option>Arial</option></select><Caret /></SelectWrap>
            <SelectWrap $w={40}><select aria-label="字号" defaultValue="10"><option>10</option></select><Caret /></SelectWrap>
            <Tool aria-label="增大字号"><GrowFont /></Tool>
            <Tool aria-label="减小字号"><GrowFont down /></Tool>
          </ToolRow>
          <ToolRow>
            <Tool $bold>B</Tool><Tool $bold $italic>I</Tool><Tool $bold $under>U</Tool><Drop aria-label="下划线"><Caret /></Drop>
            <Split />
            <Tool $dim aria-label="边框"><BorderIcon /></Tool><Drop $dim aria-label="边框选项"><Caret /></Drop>
            <Split />
            <Tool $dim aria-label="填充颜色"><BucketIcon /></Tool><Drop $dim aria-label="填充选项"><Caret /></Drop>
            <Tool aria-label="字体颜色"><FontColor /></Tool><Drop aria-label="颜色选项"><Caret /></Drop>
            <Split />
            <Tool $dim><StackedGlyphs $center><span>wén</span><span>文</span></StackedGlyphs></Tool><Drop $dim aria-label="拼音选项"><Caret /></Drop>
          </ToolRow>
        </Column>
      </GroupBody>
      <Footer name="字体" launcher />
    </Group>
    <Group $w={239}>
      <GroupBody>
        <Column $top={7} $gap={9}>
          <ToolRow>
            <Tool $dim aria-label="顶端对齐"><Lines d="M0 1.500h14M2 4.500h10M0 7.500h14" /></Tool>
            <Tool $dim aria-label="垂直居中"><Lines d="M0 4.500h14M2 7.500h10M0 10.500h14" /></Tool>
            <Tool $dim aria-label="底端对齐"><Lines d="M0 7.500h14M2 10.500h10M0 13.500h14" /></Tool>
            <Split />
            <Tool $dim aria-label="方向"><OrientIcon /></Tool><Drop $dim aria-label="方向选项"><Caret /></Drop>
          </ToolRow>
          <ToolRow>
            <Tool $dim aria-label="左对齐"><Lines d="M0 2.500h14M0 5.500h9M0 8.500h14M0 11.500h9" /></Tool>
            <Tool $dim aria-label="居中"><Lines d="M0 2.500h14M2 5.500h10M0 8.500h14M2 11.500h10" /></Tool>
            <Tool $dim aria-label="右对齐"><Lines d="M0 2.500h14M5 5.500h9M0 8.500h14M5 11.500h9" /></Tool>
            <Split />
            <Tool $dim aria-label="减少缩进"><IndentIcon /></Tool>
            <Tool $dim aria-label="增加缩进"><IndentIcon right /></Tool>
          </ToolRow>
        </Column>
        <Column $top={6}><Split $h={54} /></Column>
        <Column $top={7} $gap={9} $left={4}>
          <SmallButton $h={22} $dim><WrapIcon />自动换行</SmallButton>
          <ToolRow><SmallButton $h={22} $dim><MergeIcon />合并后居中</SmallButton><Drop $dim aria-label="合并选项"><Caret /></Drop></ToolRow>
        </Column>
      </GroupBody>
      <Footer name="对齐方式" launcher dim />
    </Group>
    <Group $w={140}>
      <GroupBody>
        <Column $top={7} $gap={9}>
          <SelectWrap $w={131} $dim><select aria-label="数字格式" defaultValue="常规"><option>常规</option></select><Caret /></SelectWrap>
          <ToolRow>
            <Tool $dim aria-label="会计数字格式"><MoneyIcon /></Tool><Drop $dim aria-label="会计选项"><Caret /></Drop>
            <Tool $dim $bold>%</Tool><Tool $dim $bold>,</Tool>
            <Split />
            <Tool $dim><StackedGlyphs><span>←.0</span><span>.00</span></StackedGlyphs></Tool>
            <Tool $dim><StackedGlyphs><span>.00</span><span>→.0</span></StackedGlyphs></Tool>
          </ToolRow>
        </Column>
      </GroupBody>
      <Footer name="数字" launcher dim />
    </Group>
    <Group $w={675}>
      <GroupBody>
        <BigButton $w={54} $dim><CondIcon />条件格式<CaretLine><Caret /></CaretLine></BigButton>
        <BigButton $w={60} $dim><TableStyleIcon />套用<CaretLine>表格格式<Caret /></CaretLine></BigButton>
        <Gallery>
          <StyleGrid>
            {styleChips.map((c) => <StyleChip key={c.t} $bg={c.bg} $fg={c.fg} $kind={c.kind}>{c.t}</StyleChip>)}
          </StyleGrid>
          <GalleryScroll>
            <button aria-label="上一行"><Svg w={6} h={4}><path d="M0 4h6L3 0z" fill="currentColor" stroke="none" /></Svg></button>
            <button aria-label="下一行"><Caret /></button>
            <button aria-label="更多"><Svg w={6} h={7}><path d="M0 .5h6" /><path d="M0 3h6L3 7z" fill="currentColor" stroke="none" /></Svg></button>
          </GalleryScroll>
        </Gallery>
      </GroupBody>
      <Footer name="样式" />
    </Group>
    <Group $w={135}>
      <GroupBody>
        <BigButton $w={42} $dim><InsertIcon />插入<CaretLine><Caret /></CaretLine></BigButton>
        <BigButton $w={42} $dim><DeleteIcon />删除<CaretLine><Caret /></CaretLine></BigButton>
        <BigButton $w={42}><FormatIcon />格式<CaretLine><Caret /></CaretLine></BigButton>
      </GroupBody>
      <Footer name="单元格" />
    </Group>
    <Group $w={229}>
      <GroupBody $pad={6}>
        <Column $min={87}>
          <ToolRow><SmallButton><SigmaIcon />自动求和</SmallButton><Drop aria-label="求和选项"><Caret /></Drop></ToolRow>
          <SmallButton $dim><FillIcon />填充<Caret /></SmallButton>
          <SmallButton><EraserIcon />清除<Caret /></SmallButton>
        </Column>
        <BigButton $w={66} $dim><SortIcon />排序和筛选<CaretLine><Caret /></CaretLine></BigButton>
        <BigButton $w={64}><FindIcon />查找和选择<CaretLine><Caret /></CaretLine></BigButton>
      </GroupBody>
      <Footer name="编辑" />
    </Group>
    <Collapse aria-label="折叠功能区"><ChevronUp /></Collapse>
  </Ribbon>
);

export default function App() {
  return (
    <Page>
      <Global />
      <TitleBar>
        <QuickAccess>
          <QuickButton aria-label="保存" $gap={8}><SaveIcon /></QuickButton>
          <QuickButton $dim aria-label="撤消"><UndoIcon /></QuickButton>
          <QuickButton $dim aria-label="撤消列表" $gap={3}><Caret /></QuickButton>
          <QuickButton $dim aria-label="恢复"><RedoIcon /></QuickButton>
          <QuickButton $dim aria-label="恢复列表" $gap={6}><Caret /></QuickButton>
          <QuickButton aria-label="自定义快速访问工具栏"><Svg w={6} h={7}><path d="M0 .5h6" /><path d="M0 3h6L3 7z" fill="currentColor" stroke="none" /></Svg></QuickButton>
        </QuickAccess>
        <DocTitle>{"2026 FO Duty Roster (HIEX & HI)  -  Excel"}</DocTitle>
        <WindowArea>
          <UserName>Lilith Zhong</UserName>
          <WindowButton aria-label="功能区显示选项"><Svg w={13} h={10}><path d="M.5.5h12v9H.5zM.5 2.500h12M6.500 9V4M4.500 6l2-2 2 2" /></Svg></WindowButton>
          <WindowButton aria-label="最小化"><Svg w={10} h={10}><path d="M0 5.500h10" /></Svg></WindowButton>
          <WindowButton aria-label="还原"><Svg w={10} h={10}><path d="M.5 2.500h7v7h-7zM2.500 2V.5h7v7H8" /></Svg></WindowButton>
          <WindowButton aria-label="关闭"><Svg w={10} h={10}><path d="M0 0l10 10M10 0 0 10" /></Svg></WindowButton>
        </WindowArea>
      </TitleBar>
      <TabRow>
        <Tab $file>文件</Tab>
        <Tab $active>开始</Tab>
        {["插入", "页面布局", "公式", "数据", "审阅", "视图", "帮助"].map((t) => <Tab key={t}>{t}</Tab>)}
        <TellMe><BulbIcon />告诉我你想要做什么</TellMe>
        <Share><ShareIcon />共享</Share>
      </TabRow>
      <RibbonBar />
      <FormulaBar>
        <NameBox><input aria-label="名称框" defaultValue="AP15" /><TriDown /></NameBox>
        <Dots><i /><i /><i /></Dots>
        <EditButtons>
          <button aria-label="取消"><Svg w={11} h={11}><path d="M1 1l9 9M10 1 1 10" strokeWidth="2" /></Svg></button>
          <button aria-label="输入"><Svg w={13} h={11}><path d="M1 6l4 4 7-9" strokeWidth="2.500" /></Svg></button>
          <button aria-label="插入函数"><Svg w={13} h={13}><path d="M8 1C5 0 5 3 4.500 6S3 13 0 12M2 5h5M7 6c3-1 2 6 5 5M12.500 6C10 6 9 11 6.500 11" strokeWidth="1.400" /></Svg></button>
        </EditButtons>
        <FormulaInput>
          <textarea aria-label="编辑栏" />
          <button aria-label="折叠编辑栏"><ChevronUp /></button>
        </FormulaInput>
      </FormulaBar>
      <SheetArea>
        <Pane><Worksheet /></Pane>
        <VScroll>
          <ScrollButton aria-label="向上滚动"><TriUp /></ScrollButton>
          <VTrack><VThumb /></VTrack>
          <ScrollButton aria-label="向下滚动"><TriDown /></ScrollButton>
        </VScroll>
      </SheetArea>
      <SheetTabs>
        <NavArrows>
          <button aria-label="上一个工作表"><TriLeft /></button>
          <button aria-label="下一个工作表"><TriRight /></button>
        </NavArrows>
        <SheetTab $active>1月</SheetTab>
        <SheetTab>2月</SheetTab>
        <AddSheet aria-label="新工作表"><Svg w={16} h={16}><circle cx="8" cy="8" r="7.500" stroke="#777" /><path d="M8 4v8M4 8h8" stroke="#777" strokeWidth="2" /></Svg></AddSheet>
        <HScroll>
          <Dots><i /><i /><i /></Dots>
          <ScrollButton aria-label="向左滚动"><TriLeft /></ScrollButton>
          <HTrack><HThumb /></HTrack>
          <ScrollButton aria-label="向右滚动"><TriRight /></ScrollButton>
        </HScroll>
      </SheetTabs>
      <StatusBar>
        <span>输入</span>
        <StatusTools>
          <ViewButton aria-label="普通"><Svg w={14} h={13}><path d="M.5.5h13v12H.5zM.5 4.500h13M.5 8.500h13M5 .5v12M9.500.5v12" /></Svg></ViewButton>
          <ViewButton aria-label="页面布局"><Svg w={14} h={13}><path d="M.5.5h13v12H.5zM3.500 2.500h7v8h-7zM5 4.500h4M5 6.500h4M5 8.500h4" /></Svg></ViewButton>
          <ViewButton aria-label="分页预览"><Svg w={14} h={13}><path d="M.5.5h13v12H.5zM5 .5v7M9.500.5v7M5 7.500h4.500" /></Svg></ViewButton>
          <ZoomButton aria-label="缩小"><Svg w={6} h={2}><path d="M0 1h6" strokeWidth="2" /></Svg></ZoomButton>
          <ZoomRange type="range" aria-label="显示比例" min={0} max={100} defaultValue={50} />
          <ZoomButton aria-label="放大"><Svg w={8} h={8}><path d="M0 4h8M4 0v8" strokeWidth="2" /></Svg></ZoomButton>
          <ZoomText>80%</ZoomText>
        </StatusTools>
      </StatusBar>
      <Taskbar>
        <Weather><CloudIcon /><span>12°C<br />阴</span></Weather>
        <Apps>
          <AppButton aria-label="开始"><WindowsLogo /></AppButton>
          <Search>
            <Svg w={15} h={15}><circle cx="6.500" cy="6.500" r="5.500" strokeWidth="1.800" /><path d="M10.500 10.500 14 14" strokeWidth="2" /></Svg>
            <input aria-label="搜索" placeholder="搜索" />
            <HatsIcon />
          </Search>
          <AppButton aria-label="任务视图"><TaskViewIcon /></AppButton>
          <AppButton aria-label="文件资源管理器" $mark="dot"><FolderIcon /></AppButton>
          <AppButton aria-label="Edge" $mark="dot"><EdgeIcon /></AppButton>
          <AppButton aria-label="应用商店"><StoreIcon /></AppButton>
          <AppButton aria-label="计算器" $mark="dot"><CalcIcon /></AppButton>
          <AppButton aria-label="微信" $mark="red" $tile="#eaaeab"><WeChatIcon /></AppButton>
          <AppButton aria-label="Chrome" $mark="dot"><ChromeIcon /></AppButton>
          <AppButton aria-label="财务软件" $mark="dot"><YenIcon /></AppButton>
          <AppButton aria-label="Excel" $mark="blue" $tile="#e6f6f0"><ExcelIcon /></AppButton>
        </Apps>
        <Tray>
          <TrayButton $w={32} aria-label="显示隐藏的图标"><Svg w={11} h={7}><path d="M.5 6 5.500 1l5 5" strokeWidth="1.500" /></Svg></TrayButton>
          <TrayButton $w={32} aria-label="同步"><Svg w={17} h={17}><path d="M1 7a7 7 0 0 1 13-2M14.500 1v4.500H10M1.500 15.500V11H6M2 12c1 2 3 3.500 5 3.500" strokeWidth="1.400" /><circle cx="12.500" cy="12.500" r="4" fill="#0078d7" stroke="none" /></Svg></TrayButton>
          <TrayButton $w={34}>中</TrayButton>
          <TrayButton $w={42}>拼</TrayButton>
          <TrayButton $w={34} aria-label="网络"><Svg w={17} h={16}><path d="M11 1H1v11h14V8M4 15h8M6 12v3M10 12v3M12.500.5h4V4l-2 2-2-2zM14.500 6v3" /></Svg></TrayButton>
          <TrayButton $w={16} aria-label="音量"><Svg w={16} h={14}><path d="M1 5h2.500L7 2v10L3.500 9H1zM9 5q1.500 2 0 4M11 3q3 4 0 8M13 1q4.500 6 0 12" /></Svg></TrayButton>
          <Clock>14:28<br />2025/12/16</Clock>
        </Tray>
      </Taskbar>
    </Page>
  );
}
